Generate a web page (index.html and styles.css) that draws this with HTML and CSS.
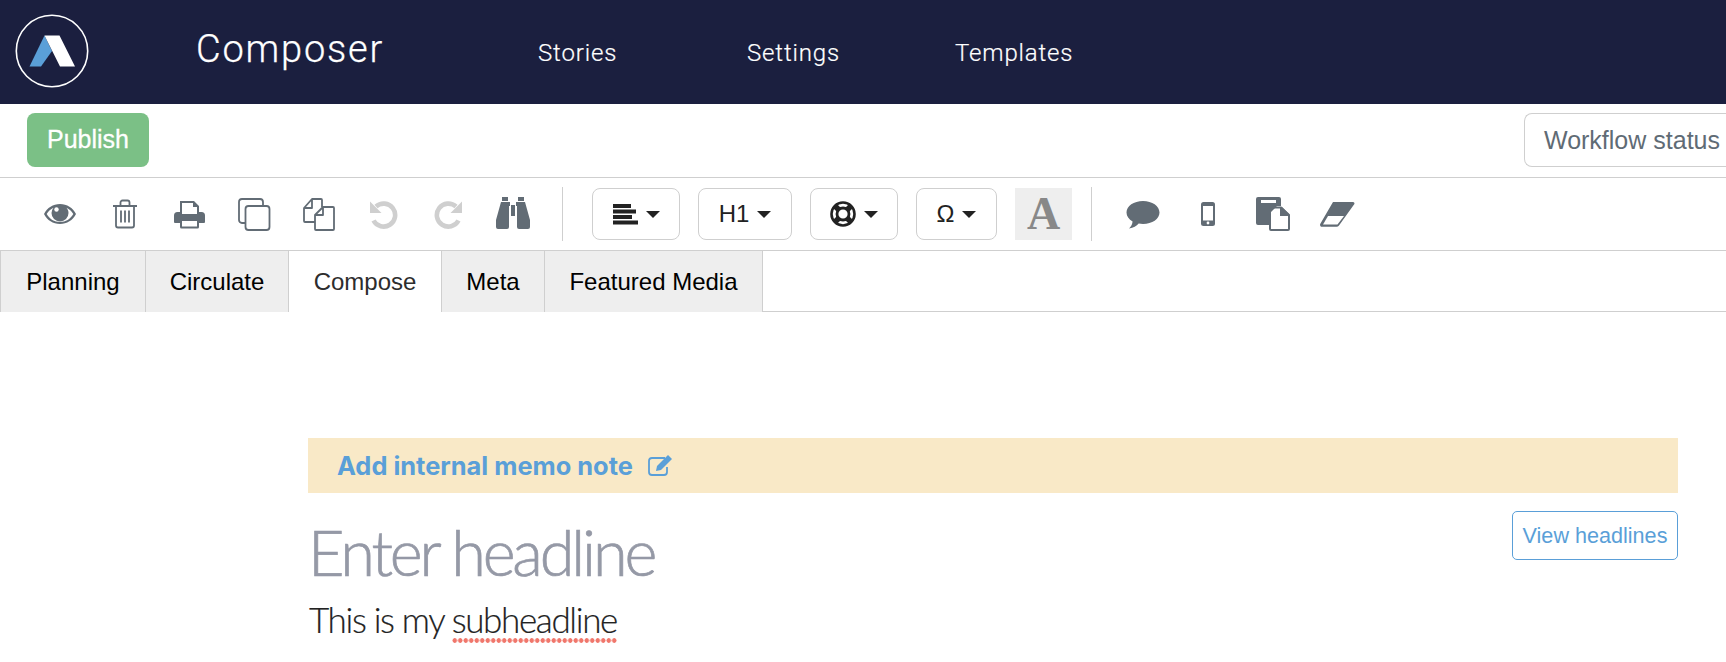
FILE: index.html
```html
<!DOCTYPE html>
<html lang="en">
<head>
<meta charset="utf-8">
<title>Composer</title>
<link rel="stylesheet" href="styles.css">
</head>
<body>
<header class="topbar">
  <svg class="logo" width="74" height="74" viewBox="0 0 74 74">
    <circle cx="37" cy="37" r="35.7" fill="none" stroke="#fff" stroke-width="1.6"/>
    <path d="M14.5 52.5 29.5 21.5 37 37 26 52.5z" fill="#5a9fd8"/>
    <path d="M29.5 21.5H44.5L60 52.5H45z" fill="#fff"/>
  </svg>
  <div class="brand">Composer</div>
  <nav class="nav">
    <a class="nav-link">Stories</a>
    <a class="nav-link">Settings</a>
    <a class="nav-link">Templates</a>
  </nav>
</header>

<div class="actions">
  <button class="btn-publish">Publish</button>
  <button class="btn-status">Workflow status</button>
</div>

<div class="toolbar">
  <span class="tool"><svg width="34" height="24" viewBox="0 0 34 24"><path fill="#626c75" d="M17 2C10 2 4.200 5.800 1 12c3.200 6.200 9 10 16 10s12.800-3.800 16-10C29.800 5.800 24 2 17 2zm0 18c-5.700 0-10.500-3-13.300-8 1.700-2.800 4-5 6.800-6.300A8.500 8.500 0 0 0 8.500 11a8.500 8.500 0 0 0 17 0c0-2-.7-3.800-2-5.300 2.800 1.300 5.100 3.500 6.800 6.300-2.800 5-7.600 8-13.300 8z"/><circle cx="13.500" cy="7.500" r="2.200" fill="#fff"/></svg></span>
  <span class="tool"><svg width="26" height="30" viewBox="0 0 26 30"><g fill="none" stroke="#626c75" stroke-width="1.800"><path d="M1 7h24M4 7v19.500a2 2 0 0 0 2 2h14a2 2 0 0 0 2-2V7M8.500 7V3.500a2 2 0 0 1 2-2h5a2 2 0 0 1 2 2V7M9 11.500v12M13 11.500v12M17 11.500v12"/></g></svg></span>
  <span class="tool"><svg width="31" height="29" viewBox="0 0 31 29"><path fill="#626c75" d="M6 1h14l5 5v6h2.500A3.500 3.500 0 0 1 31 15.500V22a1 1 0 0 1-1 1h-5v4a1.500 1.500 0 0 1-1.500 1.500h-16A1.500 1.500 0 0 1 6 27v-4H1a1 1 0 0 1-1-1v-6.500A3.500 3.500 0 0 1 3.500 12H6z"/><path fill="#fff" d="M8 3h11v4h4v7H8zM8 21h15v5.500H8z"/></svg></span>
  <span class="tool"><svg width="33" height="33" viewBox="0 0 33 33"><g fill="none" stroke="#626c75" stroke-width="1.800"><rect x="7.500" y="8" width="24" height="24" rx="3"/><path d="M7 25H4a3 3 0 0 1-3-3V4a3 3 0 0 1 3-3h18a3 3 0 0 1 3 3v3"/></g></svg></span>
  <span class="tool"><svg width="32" height="33" viewBox="0 0 32 33"><g fill="none" stroke="#626c75" stroke-width="1.800" stroke-linejoin="round"><path d="M12 24H2a1 1 0 0 1-1-1V10l8-9h9a1 1 0 0 1 1 1v7M9 1v9H1"/><path d="M13 32a1 1 0 0 1-1-1V17l8-8h10a1 1 0 0 1 1 1v21a1 1 0 0 1-1 1zM20 9v8h-8"/></g></svg></span>
  <span class="tool"><svg width="29" height="29" viewBox="0 0 29 29"><path fill="none" stroke="#cfcfcf" stroke-width="4.600" d="M7 6.500a11.500 11.500 0 1 1-2.500 14"/><path fill="#cfcfcf" d="M1 1.500v11.500h11.500z"/></svg></span>
  <span class="tool"><svg width="29" height="29" viewBox="0 0 29 29"><path fill="none" stroke="#cfcfcf" stroke-width="4.600" d="M22 6.500a11.500 11.500 0 1 0 2.500 14"/><path fill="#cfcfcf" d="M28 1.500v11.500H16.500z"/></svg></span>
  <span class="tool"><svg width="34" height="34" viewBox="0 0 34 34"><path fill="#626c75" d="M6 0h6v4H6zM22 0h6v4h-6zM5 5h9v4h-1v21a2 2 0 0 1-2 2H2a2 2 0 0 1-2-2v-7zM29 5h-9v4h1v21a2 2 0 0 0 2 2h9a2 2 0 0 0 2-2v-7z"/><path fill="#626c75" d="M15 8h4v11h-4z"/></svg></span>
  <span class="divider divider-a"></span>
  <button class="drop drop-align"><svg width="25" height="21" viewBox="0 0 25 21"><path fill="#222" d="M0 0h18v4H0zM0 5.500h23v4H0zM0 11h19v4H0zM0 16.500h25v4H0z"/></svg><span class="caret"></span></button>
  <button class="drop drop-h">H1<span class="caret"></span></button>
  <button class="drop drop-help"><svg width="26" height="26" viewBox="0 0 26 26"><g fill="none" stroke="#222"><circle cx="13" cy="13" r="11.500" stroke-width="2.600"/><circle cx="13" cy="13" r="6" stroke-width="2.800"/><path stroke-width="5.500" d="M5 5l4 4M21 5l-4 4M5 21l4-4M21 21l-4-4"/></g></svg><span class="caret"></span></button>
  <button class="drop drop-omega">Ω<span class="caret"></span></button>
  <span class="font-a">A</span>
  <span class="divider divider-b"></span>
  <span class="tool"><svg width="34" height="29" viewBox="0 0 34 29"><path fill="#626c75" d="M17 1c9.200 0 16.500 5 16.500 11.500S26.200 24 17 24c-1.500 0-3-.1-4.300-.4C10.500 26 7.500 28 3 28.500c1.500-1.500 3.300-3.800 3.600-7C2.900 19.400.5 16.200.5 12.500.5 6 7.800 1 17 1z"/></svg></span>
  <span class="tool"><svg width="14" height="24" viewBox="0 0 14 24"><rect width="14" height="24" rx="2.500" fill="#626c75"/><rect x="2" y="4" width="10" height="14.500" fill="#fff"/><circle cx="7" cy="21" r="1.400" fill="#fff"/></svg></span>
  <span class="tool"><svg width="34" height="34" viewBox="0 0 34 34"><path fill="#626c75" d="M2 0h21a2 2 0 0 1 2 2v7h-4l-8 8v11H2a2 2 0 0 1-2-2V2a2 2 0 0 1 2-2z"/><path fill="#fff" d="M5 3h15v3H5z"/><path fill="none" stroke="#626c75" stroke-width="2" d="M14 32a1 1 0 0 0 1 1h17a1 1 0 0 0 1-1V18l-8-7.500H15a1 1 0 0 0-1 1z"/><path fill="#626c75" d="M24 10h2l7 7v2h-9z"/></svg></span>
  <span class="tool"><svg width="36" height="25" viewBox="0 0 36 25"><path fill="#626c75" d="M14 0h20a1.500 1.500 0 0 1 1.200 2.300L20 23.500a3 3 0 0 1-2.500 1.300H3A2 2 0 0 1 1.200 22z"/><path fill="#fff" d="M9 14h16l-6.500 8.500H4z"/></svg></span>
</div>

<div class="tabs">
  <a class="tab">Planning</a>
  <a class="tab">Circulate</a>
  <a class="tab tab-active">Compose</a>
  <a class="tab">Meta</a>
  <a class="tab">Featured Media</a>
</div>

<main class="editor">
  <div class="memo">
    <span>Add internal memo note</span>
    <svg width="25" height="21" viewBox="0 0 25 21"><path fill="none" stroke="#5a9fd8" stroke-width="1.800" d="M17 3H4a3 3 0 0 0-3 3v11a3 3 0 0 0 3 3h12a3 3 0 0 0 3-3v-5"/><path fill="#5a9fd8" d="M20 0l4 4-11 11-5 1 1-5z"/></svg>
  </div>
  <div class="head-row">
    <div>
      <h1 class="headline">Enter headline</h1>
      <p class="sub">This is my <span class="spell">subheadline</span></p>
    </div>
    <button class="btn-view">View headlines</button>
  </div>
</main>
</body>
</html>
```

FILE: styles.css
```css
* { box-sizing: border-box; }
html, body { margin: 0; padding: 0; }
body {
  width: 1726px;
  height: 662px;
  overflow: hidden;
  background: #fff;
  font-family: "Liberation Sans", Arial, sans-serif;
  color: #000;
}
button { font-family: inherit; background: #fff; cursor: pointer; }

.topbar {
  height: 104px;
  background: #1b1f3f;
  display: flex;
  align-items: center;
  padding-left: 15px;
  color: #fff;
}
.logo { flex: none; margin-top: -2px; }
.brand {
  font-family: "Roboto", sans-serif;
  font-weight: 300;
  font-size: 38px;
  letter-spacing: 1.8px;
  margin-left: 107px;
  width: 342px;
  margin-top: -6px;
  -webkit-text-stroke: .25px #fff;
}
.nav { display: flex; margin-top: 2px; }
.nav-link {
  font-family: "Roboto", sans-serif;
  font-weight: 300;
  font-size: 24px;
  letter-spacing: .85px;
  -webkit-text-stroke: .2px #fff;
}
.nav-link:nth-child(1) { width: 209px; }
.nav-link:nth-child(2) { width: 208px; }

.actions {
  height: 74px;
  border-bottom: 1px solid #cfcfcf;
  padding: 9px 0 0 27px;
  display: flex;
  justify-content: space-between;
  align-items: flex-start;
}
.btn-publish {
  width: 122px;
  height: 54px;
  border: 0;
  border-radius: 8px;
  background: #7bc086;
  color: #fff;
  font-size: 25px;
  padding: 0 0 2px;
  -webkit-text-stroke: .3px #fff;
}
.btn-status {
  width: 230px;
  height: 54px;
  margin-right: -28px;
  border: 1px solid #cfcfcf;
  border-right: 0;
  border-radius: 8px;
  color: #5f6b75;
  font-size: 25px;
  text-align: left;
  padding: 0 0 0 19px;
  flex: none;
  white-space: nowrap;
}

.toolbar {
  height: 72px;
  display: flex;
  align-items: center;
  padding-left: 28px;
}
.tool {
  width: 64.7px;
  flex: none;
  display: flex;
  justify-content: center;
  align-items: center;
}
.divider { width: 1px; height: 54px; background: #cfcfcf; flex: none; }
.divider-a { margin: 0 29px 0 16.5px; }
.divider-b { margin: 0 19px 0 19px; }
.drop {
  height: 52px;
  border: 1px solid #cfcfcf;
  border-radius: 8px;
  display: flex;
  align-items: center;
  justify-content: center;
  gap: 8px;
  font-size: 24px;
  color: #222;
  padding: 0;
  margin-right: 18px;
  flex: none;
}
.drop-align { width: 88px; }
.drop-h { width: 94px; }
.drop-help { width: 88px; }
.drop-omega { width: 81px; }
.caret {
  width: 0;
  height: 0;
  border-left: 7.5px solid transparent;
  border-right: 7.5px solid transparent;
  border-top: 7.500px solid #222;
}
.font-a {
  width: 57px;
  height: 52px;
  background: #eee;
  color: #888;
  font-family: "Liberation Serif", serif;
  font-weight: 700;
  font-size: 46px;
  line-height: 52px;
  text-align: center;
  flex: none;
}

.tabs {
  height: 62px;
  border-top: 1px solid #cfcfcf;
  border-bottom: 1px solid #cfcfcf;
  display: flex;
}
.tab {
  display: flex;
  align-items: center;
  justify-content: center;
  background: #eee;
  border-right: 1px solid #cfcfcf;
  border-left: 1px solid #cfcfcf;
  margin-left: -1px;
  font-size: 24px;
  margin-bottom: -1px;
}
.tab:nth-child(1) { width: 146px; margin-left: 0; }
.tab:nth-child(2) { width: 144px; }
.tab:nth-child(3) { width: 154px; }
.tab:nth-child(4) { width: 104px; }
.tab:nth-child(5) { width: 219px; }
.tab-active { background: #fff; color: #2d2d2d; }

.editor { padding: 126px 48px 0 308px; }
.memo {
  height: 55px;
  background: #f9e9c7;
  display: flex;
  align-items: center;
  gap: 15px;
  padding-left: 29px;
  font-family: "Inter", sans-serif;
  font-weight: 700;
  font-size: 25.4px;
  color: #5a9fd8;
}
.head-row {
  display: flex;
  justify-content: space-between;
  align-items: flex-start;
  padding-top: 18px;
}
.headline {
  margin: 0;
  padding-top: 4px;
  font-family: "Lato", sans-serif;
  font-weight: 300;
  font-size: 63px;
  line-height: 74px;
  letter-spacing: -3.15px;
  color: #9599a6;
  -webkit-text-stroke: .7px #9599a6;
}
.sub {
  margin: 8px 0 0 1px;
  font-family: "Lato", sans-serif;
  font-weight: 300;
  font-size: 35px;
  line-height: 44px;
  letter-spacing: -1.35px;
  color: #222;
  -webkit-text-stroke: .2px #222;
}
.spell {
  display: inline-block;
  background: radial-gradient(circle at center, #f0776c 2px, transparent 2.6px) 0 100% / 5.5px 5px repeat-x;
  padding-bottom: 2px;
}
.btn-view {
  width: 166px;
  height: 49px;
  border: 1px solid #5a9fd8;
  border-radius: 5px;
  color: #5a9fd8;
  font-size: 21.6px;
  padding: 0;
}
```
